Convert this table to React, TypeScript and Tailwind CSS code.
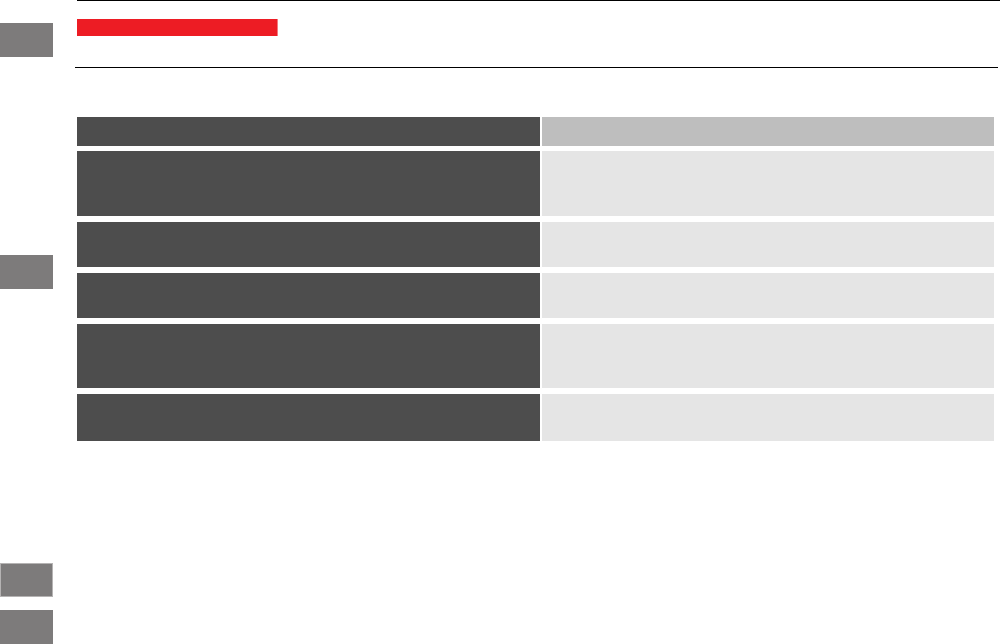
import React from "react";

interface TableRow {
  height: string;
  gap: string;
}

const rows: TableRow[] = [
  { height: "h-[65px]", gap: "mt-[5px]" },
  { height: "h-[45px]", gap: "mt-[6px]" },
  { height: "h-[45px]", gap: "mt-[6px]" },
  { height: "h-[64px]", gap: "mt-[6px]" },
  { height: "h-[47px]", gap: "mt-[6px]" },
];

export default function App() {
  return (
    <div className="w-[1000px] h-[644px] bg-white overflow-hidden flex font-['Liberation_Sans',sans-serif]">
      {/* Side markers */}
      <div className="w-[53px] shrink-0 flex flex-col">
        <div className="mt-[23px] h-[34px] bg-[#7d7b7b]" />
        <div className="mt-[198px] h-[34px] bg-[#7d7b7b]" />
        <div className="mt-[274px] h-[34px] bg-[#7d7b7b] border border-[#b5b3b3]" />
        <div className="mt-[13px] h-[34px] bg-[#7d7b7b]" />
      </div>

      {/* Main */}
      <div className="ml-[24px] flex-1 flex flex-col">
        <div className="h-px bg-black" />
        <div className="mt-[18px] h-[17px] w-[201px] flex">
          <div className="flex-1 bg-[#ed1c24]" />
          <div className="w-px bg-[#f27a7f]" />
        </div>
        <div className="mt-[31px] -ml-[2px] mr-[2px] h-px bg-black" />

        {/* Table */}
        <div className="mt-[49px] w-[917px] flex flex-col">
          <div className="flex gap-[2px] h-[29px]">
            <div className="w-[463px] bg-[#4d4d4d]" />
            <div className="flex-1 bg-[#bebebe]" />
          </div>
          {rows.map((row, i) => (
            <div key={i} className={`flex gap-[2px] ${row.height} ${row.gap}`}>
              <div className="w-[463px] bg-[#4d4d4d]" />
              <div className="flex-1 bg-[#e5e5e5]" />
            </div>
          ))}
        </div>
      </div>
    </div>
  );
}
